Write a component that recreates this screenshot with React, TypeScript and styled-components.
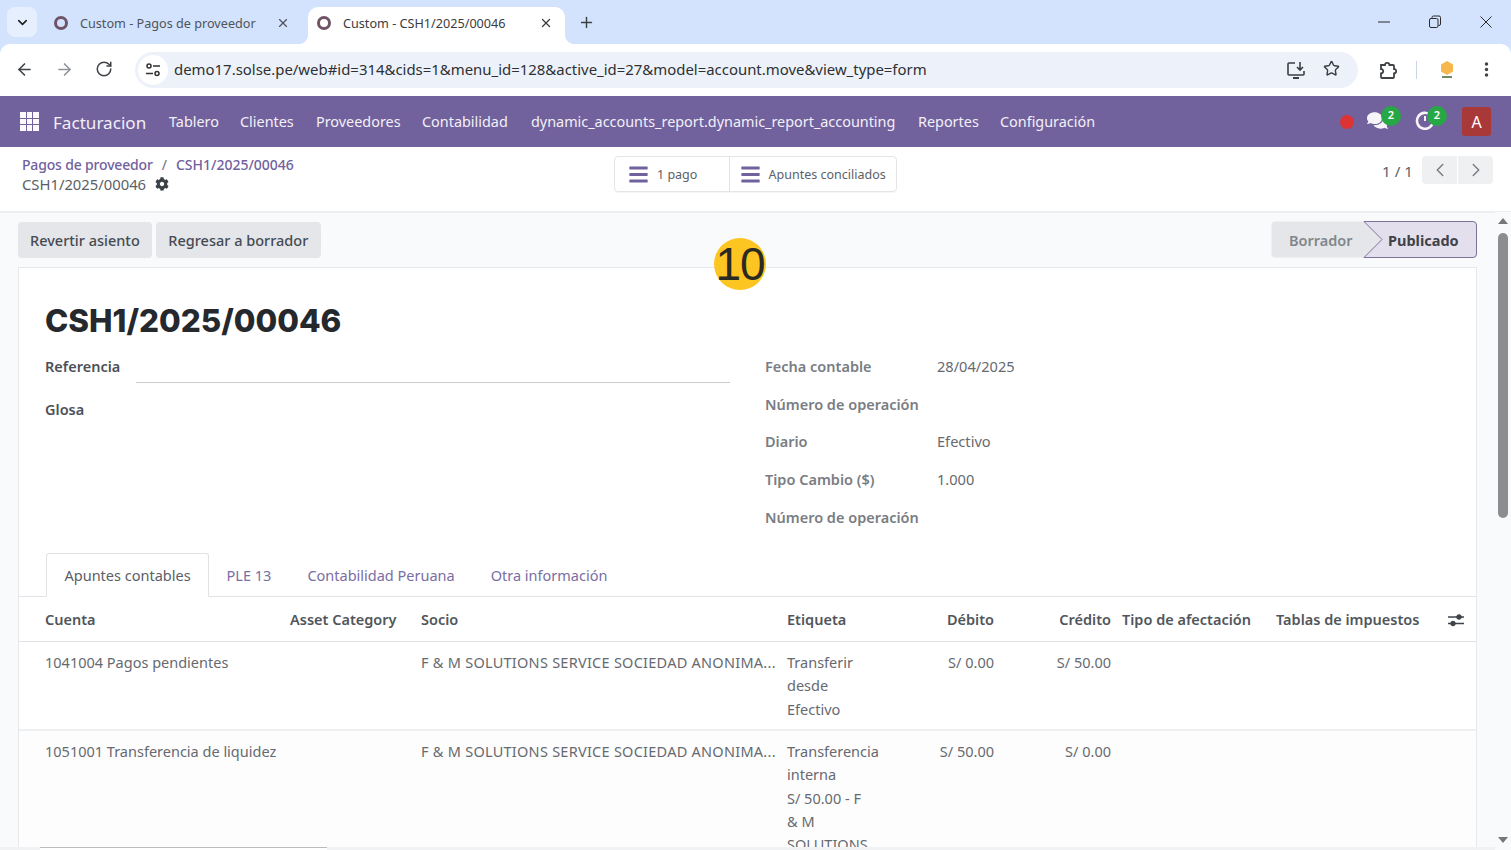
import React from 'react';
import styled, { createGlobalStyle } from 'styled-components';
import { ArrowLeft, ArrowRight, ChevronDown, ChevronLeft, ChevronRight, EllipsisVertical, Plus, RotateCw, Star, X } from 'lucide-react';
import { FaBars, FaCog, FaComments } from 'react-icons/fa';

const Global = createGlobalStyle`
  html, body { margin: 0; padding: 0; height: 100%; overflow: hidden; }
  body { font-family: "Noto Sans", "Open Sans", sans-serif; color: #4b5058; background: #f9fafb; }
  * { box-sizing: border-box; }
`;

const Page = styled.div`
  position: relative;
  width: 1511px;
  height: 850px;
  overflow: hidden;
  background: #f9fafb;
`;

/* browser chrome */
const BrowserFrame = styled.div`
  background: #d3e3fd;
`;
const TabStrip = styled.div`
  height: 44px;
  position: relative;
`;
const TabSearch = styled.div`
  position: absolute;
  left: 7px;
  top: 7px;
  width: 30px;
  height: 30px;
  border-radius: 8px;
  background: #e6effd;
  display: flex;
  align-items: center;
  justify-content: center;
  color: #1f1f1f;
`;
const Tab = styled.div<{ $active?: boolean }>`
  position: absolute;
  top: 7px;
  left: ${p => (p.$active ? 308 : 45)}px;
  width: ${p => (p.$active ? 257 : 253)}px;
  height: 37px;
  display: flex;
  align-items: center;
  padding: 0 ${p => (p.$active ? 12 : 8)}px 6px 9px;
  border-radius: 10px 10px 0 0;
  background: ${p => (p.$active ? '#fff' : 'transparent')};
  color: ${p => (p.$active ? '#3c3c3c' : '#50545a')};
  font-size: 12.65px;
  ${p => p.$active && `
    &::before, &::after {
      content: "";
      position: absolute;
      bottom: 0;
      width: 10px;
      height: 10px;
    }
    &::before { left: -10px; background: radial-gradient(circle at 0 0, transparent 10px, #fff 10.5px); }
    &::after { right: -10px; background: radial-gradient(circle at 100% 0, transparent 10px, #fff 10.5px); }
  `}
`;
const Favicon = styled.span`
  width: 14px;
  height: 14px;
  flex: none;
  border-radius: 50%;
  border: 3px solid #6f5468;
  margin-right: 12px;
`;
const TabTitle = styled.span`
  flex: 1;
  white-space: nowrap;
`;
const NewTab = styled.div`
  position: absolute;
  left: 578px;
  top: 14px;
  color: #3c4043;
  display: flex;
`;
const WindowButtons = styled.div`
  position: absolute;
  right: 0;
  top: 8px;
  display: flex;
  color: #2b2b2b;
`;
const WindowButton = styled.div`
  width: 51px;
  height: 28px;
  display: flex;
  align-items: center;
  justify-content: center;
`;

const Toolbar = styled.div`
  height: 52px;
  background: #fff;
  border-radius: 10px 10px 0 0;
  position: relative;
  display: flex;
  align-items: center;
`;
const NavIcon = styled.div<{ $x: number; $muted?: boolean }>`
  position: absolute;
  left: ${p => p.$x}px;
  top: 16px;
  display: flex;
  color: ${p => (p.$muted ? '#8e9297' : '#3f4246')};
`;
const Omnibox = styled.div`
  position: absolute;
  left: 135px;
  top: 8px;
  width: 1223px;
  height: 36px;
  border-radius: 18px;
  background: #edf2fa;
  display: flex;
  align-items: center;
`;
const SiteInfo = styled.div`
  width: 30px;
  height: 30px;
  margin-left: 3px;
  border-radius: 50%;
  background: #fff;
  display: flex;
  align-items: center;
  justify-content: center;
`;
const Url = styled.div`
  margin-left: 6px;
  margin-top: -2px;
  font-size: 14.93px;
  color: #2e3033;
  white-space: nowrap;
`;
const OmniIcon = styled.div<{ $x: number }>`
  position: absolute;
  left: ${p => p.$x}px;
  top: 8px;
  display: flex;
  color: #3a3d41;
`;
const ToolbarDivider = styled.div`
  position: absolute;
  left: 1416px;
  top: 17px;
  width: 1px;
  height: 18px;
  background: #c9d4e6;
`;

/* odoo navbar */
const Navbar = styled.nav`
  height: 51px;
  background: #71619d;
  color: #f3f0f7;
  display: flex;
  align-items: center;
  position: relative;
`;
const AppsGrid = styled.div`
  margin-left: 20px;
  width: 19px;
  height: 19px;
  display: grid;
  grid-template: repeat(3, 1fr) / repeat(3, 1fr);
  gap: 1px;
`;
const AppsCell = styled.span`
  background: #fbf9fd;
`;
const Brand = styled.div`
  position: absolute;
  left: 53px;
  top: 15px;
  font-size: 17.1px;
  color: #f2eff6;
`;
const MenuItem = styled.div<{ $x: number }>`
  position: absolute;
  left: ${p => p.$x}px;
  top: 16px;
  font-size: 14.4px;
  white-space: nowrap;
`;
const RedDot = styled.span`
  position: absolute;
  left: 1340px;
  top: 19px;
  width: 14px;
  height: 14px;
  border-radius: 50%;
  background: #dc3434;
`;
const SysIcon = styled.div<{ $x: number }>`
  position: absolute;
  left: ${p => p.$x}px;
  top: 14px;
  display: flex;
  color: #f6f4f9;
`;
const Badge = styled.span<{ $x: number }>`
  position: absolute;
  left: ${p => p.$x}px;
  top: 10px;
  width: 20px;
  height: 20px;
  border-radius: 50%;
  background: #28a745;
  color: #fff;
  font-size: 11px;
  font-weight: 600;
  display: flex;
  align-items: center;
  justify-content: center;
  padding-bottom: 3px;
`;
const Avatar = styled.div`
  position: absolute;
  left: 1462px;
  top: 11px;
  width: 29px;
  height: 29px;
  border-radius: 3px;
  background: #a93838;
  color: #fff;
  font-size: 16px;
  display: flex;
  align-items: center;
  justify-content: center;
`;

/* control panel */
const ControlPanel = styled.div`
  height: 66px;
  background: #fff;
  border-bottom: 2px solid #eceef1;
  position: relative;
`;
const Breadcrumb = styled.div`
  position: absolute;
  left: 22px;
  top: 8px;
  font-size: 14px;
  line-height: 19px;
  color: #71619d;
  font-weight: 500;
  white-space: nowrap;
`;
const CrumbLink = styled.span`
  letter-spacing: -0.17px;
`;
const Slash = styled.span`
  color: #6c7177;
  margin: 0 9px;
  font-weight: 400;
`;
const RecordName = styled.div`
  position: absolute;
  left: 22px;
  top: 27px;
  font-size: 14.8px;
  line-height: 20px;
  color: #5b6067;
  display: flex;
  align-items: center;
  gap: 9px;
`;
const StatGroup = styled.div`
  position: absolute;
  left: 614px;
  top: 9px;
  width: 283px;
  height: 36px;
  display: flex;
  border: 1px solid #e3e5e8;
  border-radius: 4px;
  box-shadow: 0 1px 1px rgba(0, 0, 0, 0.04);
`;
const StatButton = styled.div<{ $w: number }>`
  width: ${p => p.$w}px;
  display: flex;
  align-items: center;
  padding-left: 13px;
  gap: 8px;
  font-size: 12.5px;
  color: #5c6168;
  white-space: nowrap;
  & + & { border-left: 1px solid #dfe1e4; padding-left: 10px; }
  svg { color: #71619d; }
`;
const Pager = styled.div`
  position: absolute;
  left: 1382px;
  top: 14px;
  font-size: 15.2px;
  color: #5c6168;
`;
const PagerButtons = styled.div`
  position: absolute;
  left: 1422px;
  top: 9px;
  display: flex;
  gap: 1px;
`;
const PagerButton = styled.div`
  width: 35px;
  height: 28px;
  background: #eef0f2;
  display: flex;
  align-items: center;
  justify-content: center;
  color: #75797f;
  &:first-child { border-radius: 4px 0 0 4px; }
  &:last-child { border-radius: 0 4px 4px 0; }
`;

/* status bar */
const StatusBar = styled.div`
  height: 54px;
  position: relative;
`;
const ActionButtons = styled.div`
  position: absolute;
  left: 18px;
  top: 9px;
  display: flex;
  gap: 4px;
`;
const ActionButton = styled.div`
  height: 36px;
  padding: 0 12.5px 0 12px;
  background: #e4e6e9;
  border-radius: 4px;
  color: #464b52;
  font-size: 14.5px;
  font-weight: 500;
  display: flex;
  align-items: center;
  white-space: nowrap;
`;
const Stages = styled.svg`
  position: absolute;
  left: 1271px;
  top: 8px;
`;
const StageLabel = styled.div<{ $x: number; $active?: boolean }>`
  position: absolute;
  left: ${p => p.$x}px;
  top: 8px;
  height: 37px;
  display: flex;
  align-items: center;
  font-size: 14.5px;
  font-weight: ${p => (p.$active ? 700 : 600)};
  color: ${p => (p.$active ? '#3f4349' : '#82868c')};
`;

/* sheet */
const Sheet = styled.div`
  position: absolute;
  left: 18px;
  top: 267px;
  width: 1459px;
  height: 590px;
  background: #fff;
  border: 1px solid #e6e8eb;
`;
const Title = styled.h1`
  position: absolute;
  left: 26px;
  top: 32px;
  margin: 0;
  font-family: Inter, "Noto Sans", sans-serif;
  font-size: 31.4px;
  line-height: 42px;
  font-weight: 800;
  color: #25282c;
  white-space: nowrap;
`;
const FieldLabel = styled.div<{ $x: number; $y: number; $strong?: boolean }>`
  position: absolute;
  left: ${p => p.$x}px;
  top: ${p => p.$y}px;
  font-size: 14.5px;
  line-height: 20px;
  font-weight: 600;
  color: ${p => (p.$strong ? '#4d5157' : '#797d83')};
  white-space: nowrap;
`;
const FieldValue = styled.div<{ $y: number }>`
  position: absolute;
  left: 918px;
  top: ${p => p.$y}px;
  font-size: 14.6px;
  line-height: 20px;
  color: #666a70;
`;
const FieldLine = styled.div`
  position: absolute;
  left: 117px;
  top: 114px;
  width: 594px;
  height: 1px;
  background: #c9ccd0;
`;
const Tabs = styled.div`
  position: absolute;
  left: 0;
  top: 285px;
  width: 100%;
  height: 44px;
  border-bottom: 1px solid #e0e2e5;
  padding-left: 27px;
  display: flex;
`;
const TabLink = styled.div<{ $active?: boolean }>`
  height: ${p => (p.$active ? 44 : 43)}px;
  padding: 0 18px;
  ${p => p.$active && 'padding: 0 17px 0 17.5px;'}
  display: flex;
  align-items: center;
  font-size: 14.5px;
  white-space: nowrap;
  color: ${p => (p.$active ? '#5b6067' : '#7a6ea3')};
  background: #fff;
  ${p => p.$active && 'border: 1px solid #e0e2e5; border-bottom-color: #fff; border-radius: 3px 3px 0 0;'}
`;
const TableGrid = styled.div`
  position: absolute;
  left: 0;
  top: 329px;
  width: 100%;
`;
const Row = styled.div<{ $head?: boolean; $shade?: boolean; $h: number }>`
  height: ${p => p.$h}px;
  display: grid;
  grid-template-columns: 26px 245px 131px 366px 108px 99px 117px 11px 154px 1fr;
  font-size: 14.5px;
  line-height: 23.3px;
  padding-top: ${p => (p.$head ? 11 : 9)}px;
  color: ${p => (p.$head ? '#52565c' : '#666a70')};
  font-weight: ${p => (p.$head ? 600 : 400)};
  background: ${p => (p.$shade ? '#fdfdfd' : '#fff')};
  border-bottom: ${p => (p.$head ? 1 : 2)}px solid ${p => (p.$head ? '#dfe1e4' : '#eeeff1')};
  overflow: hidden;
`;
const Cell = styled.div<{ $col: number; $right?: boolean; $wrap?: boolean; $caps?: boolean }>`
  grid-column: ${p => p.$col};
  text-align: ${p => (p.$right ? 'right' : 'left')};
  white-space: ${p => (p.$wrap ? 'normal' : 'nowrap')};
  ${p => p.$wrap && 'max-width: 91px;'}
  ${p => p.$caps && 'letter-spacing: 0.26px;'}
`;
const OptionalToggle = styled.svg`
  position: absolute;
  left: 1428px;
  top: 15px;
`;

/* page scrollbars and step marker */
const ScrollTrack = styled.div`
  position: absolute;
  left: 1495px;
  top: 212px;
  width: 16px;
  height: 638px;
  background: #f9fafb;
`;
const ScrollThumb = styled.div`
  position: absolute;
  left: 3px;
  top: 21px;
  width: 10px;
  height: 285px;
  border-radius: 5px;
  background: #8b8d90;
`;
const ScrollArrow = styled.div<{ $down?: boolean }>`
  position: absolute;
  left: 3px;
  ${p => (p.$down ? 'bottom: 7px; border-top: 6px solid #777;' : 'top: 6px; border-bottom: 6px solid #777;')}
  width: 0;
  height: 0;
  border-left: 5px solid transparent;
  border-right: 5px solid transparent;
`;
const BottomBar = styled.div`
  position: absolute;
  left: 0;
  bottom: 0;
  width: 1495px;
  height: 3px;
  background: #f1f2f3;
`;
const BottomThumb = styled.div`
  position: absolute;
  left: 40px;
  top: 0;
  width: 287px;
  height: 3px;
  background: #fff;
  border-top: 1px solid #b9bbbe;
`;
const StepMarker = styled.div`
  position: absolute;
  left: 714px;
  top: 238px;
  width: 52px;
  height: 52px;
  border-radius: 50%;
  background: #fdc521;
  color: #2a2a22;
  font-family: "Liberation Sans", sans-serif;
  font-size: 46px;
  display: flex;
  align-items: center;
  justify-content: center;
  letter-spacing: -1px;
`;

const rows = [
  { h: 89, account: '1041004 Pagos pendientes', label: 'Transferir desde Efectivo', debit: 'S/ 0.00', credit: 'S/ 50.00' },
  { h: 130, account: '1051001 Transferencia de liquidez', label: 'Transferencia interna S/\u00a050.00 - F &\u00a0M SOLUTIONS', debit: 'S/ 50.00', credit: 'S/ 0.00', shade: true },
];
const menu: [string, number][] = [
  ['Tablero', 169],
  ['Clientes', 240],
  ['Proveedores', 316],
  ['Contabilidad', 422],
  ['dynamic_accounts_report.dynamic_report_accounting', 531],
  ['Reportes', 918],
  ['Configuración', 1000],
];
const rightFields: [string, number, string?][] = [
  ['Fecha contable', 88, '28/04/2025'],
  ['Número de operación', 126],
  ['Diario', 163, 'Efectivo'],
  ['Tipo Cambio ($)', 201, '1.000'],
  ['Número de operación', 239],
];

export default function App() {
  return (
    <Page>
      <Global />
      <BrowserFrame>
        <TabStrip>
          <TabSearch><ChevronDown size={15} strokeWidth={2.5} /></TabSearch>
          <Tab>
            <Favicon />
            <TabTitle>Custom - Pagos de proveedor</TabTitle>
            <X size={14} strokeWidth={2} />
          </Tab>
          <Tab $active>
            <Favicon />
            <TabTitle>Custom - CSH1/2025/00046</TabTitle>
            <X size={14} strokeWidth={2.2} />
          </Tab>
          <NewTab><Plus size={17} /></NewTab>
          <WindowButtons>
            <WindowButton>
              <svg width="14" height="14" viewBox="0 0 14 14"><path d="M1 7h12" stroke="currentColor" fill="none" /></svg>
            </WindowButton>
            <WindowButton>
              <svg width="14" height="14" viewBox="0 0 14 14" fill="none" stroke="currentColor">
                <rect x="1.500" y="3.500" width="8.500" height="9" rx="1.500" />
                <path d="M4 3V2.500A1.500 1.500 0 0 1 5.500 1H11a1.500 1.500 0 0 1 1.500 1.500V9A1.500 1.500 0 0 1 11 10.500h-.5" />
              </svg>
            </WindowButton>
            <WindowButton>
              <svg width="14" height="14" viewBox="0 0 14 14"><path d="M1.500 1.500l11 11M12.500 1.500l-11 11" stroke="currentColor" fill="none" /></svg>
            </WindowButton>
          </WindowButtons>
        </TabStrip>

        <Toolbar>
          <NavIcon $x={15}><ArrowLeft size={19} /></NavIcon>
          <NavIcon $x={55} $muted><ArrowRight size={19} /></NavIcon>
          <NavIcon $x={95}><RotateCw size={18} /></NavIcon>
          <Omnibox>
            <SiteInfo>
              <svg width="16" height="16" viewBox="0 0 16 16" fill="none" stroke="#2e3033" strokeWidth="1.500">
                <circle cx="4" cy="4" r="2" />
                <path d="M8 4h7M1 11.500h7" />
                <circle cx="12" cy="11.500" r="2" />
              </svg>
            </SiteInfo>
            <Url>demo17.solse.pe/web#id=314&amp;cids=1&amp;menu_id=128&amp;active_id=27&amp;model=account.move&amp;view_type=form</Url>
            <OmniIcon $x={1151}>
              <svg width="20" height="20" viewBox="0 0 20 20" fill="none" stroke="currentColor" strokeWidth="1.600">
                <path d="M9 3H3a1 1 0 0 0-1 1v10a1 1 0 0 0 1 1h14a1 1 0 0 0 1-1v-3" />
                <path d="M7 18h6" strokeWidth="2" />
                <path d="M14 2v8M11 7l3 3 3-3" />
              </svg>
            </OmniIcon>
            <OmniIcon $x={1188}><Star size={17} strokeWidth={2} /></OmniIcon>
          </Omnibox>
          <NavIcon $x={1378}>
            <svg width="20" height="20" viewBox="0 0 20 20" fill="none" stroke="currentColor" strokeWidth="1.800">
              <path d="M3 5h4a2.200 2.200 0 1 1 4.400 0H15a1 1 0 0 1 1 1v3a2.200 2.200 0 1 1 0 4.400V17a1 1 0 0 1-1 1H4a1 1 0 0 1-1-1v-3.600a2.200 2.200 0 1 0 0-4.400z" />
            </svg>
          </NavIcon>
          <ToolbarDivider />
          <NavIcon $x={1438}>
            <svg width="18" height="20" viewBox="0 0 18 20">
              <path d="M9 1l6 3.500v7L9 15l-6-3.500v-7z" fill="#f6b84c" />
              <path d="M4 17h10" stroke="#6f8a6a" strokeWidth="2" />
            </svg>
          </NavIcon>
          <NavIcon $x={1477}><EllipsisVertical size={19} strokeWidth={2.400} /></NavIcon>
        </Toolbar>
      </BrowserFrame>

      <Navbar>
        <AppsGrid>{Array.from({ length: 9 }, (_, i) => <AppsCell key={i} />)}</AppsGrid>
        <Brand>Facturacion</Brand>
        {menu.map(([name, x]) => <MenuItem key={name} $x={x}>{name}</MenuItem>)}
        <RedDot />
        <SysIcon $x={1367}><FaComments size={21} /></SysIcon>
        <Badge $x={1381}>2</Badge>
        <SysIcon $x={1415}>
          <svg width="20" height="20" viewBox="0 0 20 20" fill="none" stroke="currentColor" strokeWidth="2.600">
            <path d="M15.500 5a8 8 0 1 0 2.500 6" />
            <path d="M10 6v5" strokeWidth="2" />
          </svg>
        </SysIcon>
        <Badge $x={1427}>2</Badge>
        <Avatar>A</Avatar>
      </Navbar>

      <ControlPanel>
        <Breadcrumb><CrumbLink>Pagos de proveedor</CrumbLink><Slash>/</Slash>CSH1/2025/00046</Breadcrumb>
        <RecordName>CSH1/2025/00046 <FaCog size={14} color="#3d4147" /></RecordName>
        <StatGroup>
          <StatButton $w={114}><FaBars size={21} />1 pago</StatButton>
          <StatButton $w={168}><FaBars size={21} />Apuntes conciliados</StatButton>
        </StatGroup>
        <Pager>1 / 1</Pager>
        <PagerButtons>
          <PagerButton><ChevronLeft size={22} strokeWidth={1.500} /></PagerButton>
          <PagerButton><ChevronRight size={22} strokeWidth={1.500} /></PagerButton>
        </PagerButtons>
      </ControlPanel>

      <StatusBar>
        <ActionButtons>
          <ActionButton>Revertir asiento</ActionButton>
          <ActionButton>Regresar a borrador</ActionButton>
        </ActionButtons>
        <Stages width="206" height="37" viewBox="0 0 206 37">
          <path d="M4 .5H93L111 18.500 93 36.500H4A3.500 3.500 0 0 1 .5 33V4A3.500 3.500 0 0 1 4 .5z" fill="#e4e6e9" />
          <path d="M93 .5H202A3.500 3.500 0 0 1 205.500 4V33A3.500 3.500 0 0 1 202 36.500H93L111 18.500z" fill="#e3dfed" stroke="#7d7199" />
        </Stages>
        <StageLabel $x={1289}>Borrador</StageLabel>
        <StageLabel $x={1388} $active>Publicado</StageLabel>
      </StatusBar>

      <Sheet>
        <Title>CSH1/2025/00046</Title>
        <FieldLabel $x={26} $y={88} $strong>Referencia</FieldLabel>
        <FieldLine />
        <FieldLabel $x={26} $y={131} $strong>Glosa</FieldLabel>
        {rightFields.map(([label, y, value]) => (
          <React.Fragment key={label + y}>
            <FieldLabel $x={746} $y={y}>{label}</FieldLabel>
            {value && <FieldValue $y={y}>{value}</FieldValue>}
          </React.Fragment>
        ))}
        <Tabs>
          <TabLink $active>Apuntes contables</TabLink>
          <TabLink>PLE 13</TabLink>
          <TabLink>Contabilidad Peruana</TabLink>
          <TabLink>Otra información</TabLink>
        </Tabs>
        <TableGrid>
          <Row $head $h={45}>
            <Cell $col={2}>Cuenta</Cell>
            <Cell $col={3}>Asset Category</Cell>
            <Cell $col={4}>Socio</Cell>
            <Cell $col={5}>Etiqueta</Cell>
            <Cell $col={6} $right>Débito</Cell>
            <Cell $col={7} $right>Crédito</Cell>
            <Cell $col={9}>Tipo de afectación</Cell>
            <Cell $col={10}>Tablas de impuestos</Cell>
          </Row>
          <OptionalToggle width="18" height="16" viewBox="0 0 18 16" stroke="#3f4349" fill="#3f4349">
            <path d="M1 5h16M1 11.500h16" strokeWidth="1.300" />
            <circle cx="12" cy="5" r="2.300" />
            <circle cx="6" cy="11.500" r="2.300" />
          </OptionalToggle>
          {rows.map(r => (
            <Row key={r.account} $h={r.h} $shade={r.shade}>
              <Cell $col={2}>{r.account}</Cell>
              <Cell $col={4} $caps>F &amp; M SOLUTIONS SERVICE SOCIEDAD ANONIMA...</Cell>
              <Cell $col={5} $wrap>{r.label}</Cell>
              <Cell $col={6} $right>{r.debit}</Cell>
              <Cell $col={7} $right>{r.credit}</Cell>
            </Row>
          ))}
        </TableGrid>
      </Sheet>

      <ScrollTrack>
        <ScrollArrow />
        <ScrollThumb />
        <ScrollArrow $down />
      </ScrollTrack>
      <BottomBar><BottomThumb /></BottomBar>
      <StepMarker>10</StepMarker>
    </Page>
  );
}
